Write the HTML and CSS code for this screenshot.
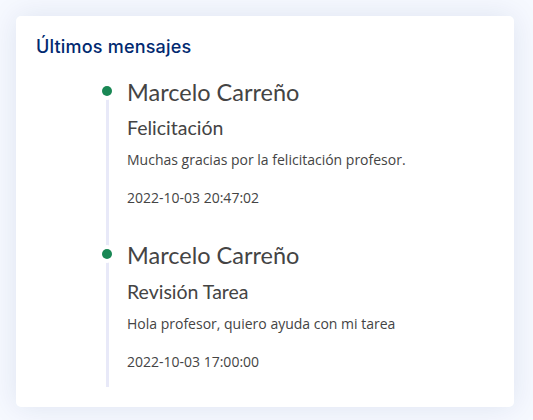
FILE: index.html
```html
<!DOCTYPE html>
<html lang="es">
<head>
<meta charset="utf-8">
<title>Últimos mensajes</title>
<link rel="stylesheet" href="styles.css">
</head>
<body>
<div class="card">
  <div class="card-body">
    <h5 class="card-title">Últimos mensajes</h5>
    <div class="timeline">
      <div class="item">
        <span class="dot"></span>
        <div class="name">Marcelo Carreño</div>
        <div class="subject">Felicitación</div>
        <div class="message">Muchas gracias por la felicitación profesor.</div>
        <div class="date">2022-10-03 20:47:02</div>
      </div>
      <div class="item">
        <span class="dot"></span>
        <div class="name">Marcelo Carreño</div>
        <div class="subject">Revisión Tarea</div>
        <div class="message">Hola profesor, quiero ayuda con mi tarea</div>
        <div class="date">2022-10-03 17:00:00</div>
      </div>
    </div>
  </div>
</div>
</body>
</html>
```

FILE: styles.css
```css
html, body {
  margin: 0;
  padding: 0;
}
body {
  background: #f6f9ff;
  font-family: "Open Sans", sans-serif;
  color: #444444;
  padding: 16px 19px 14px 16px;
  box-sizing: border-box;
  min-height: 420px;
}
.card {
  background: #ffffff;
  border-radius: 5px;
  box-shadow: 0 0 30px rgba(1, 41, 112, 0.1);
}
.card-body {
  padding: 0 20px 20px 20px;
}
.card-title {
  margin: 0;
  padding: 20px 0 15px 0;
  font-family: "Inter", sans-serif;
  font-size: 18px;
  font-weight: 500;
  line-height: 21.6px;
  letter-spacing: 0.2px;
  color: #012970;
}
.timeline {
  margin-left: 70px;
  padding-top: 9px;
}
.item {
  position: relative;
  border-left: 3px solid #e8e9f8;
  padding: 0 0 38px 18px;
}
.item:last-child {
  padding-bottom: 16px;
}
.dot {
  position: absolute;
  left: -7px;
  top: 4px;
  width: 10px;
  height: 10px;
  border-radius: 50%;
  background: #198754;
  box-shadow: 0 0 0 4px #ffffff;
}
.name {
  font-family: "Lato", sans-serif;
  font-size: 23.5px;
  line-height: 21px;
  color: #444444;
}
.subject {
  margin-top: 14.5px;
  font-family: "Lato", sans-serif;
  font-size: 19.5px;
  line-height: 22px;
  color: #444444;
}
.message {
  margin-top: 12px;
  font-size: 14px;
  line-height: 18px;
}
.date {
  margin-top: 20px;
  font-size: 14px;
  line-height: 18px;
}
```
